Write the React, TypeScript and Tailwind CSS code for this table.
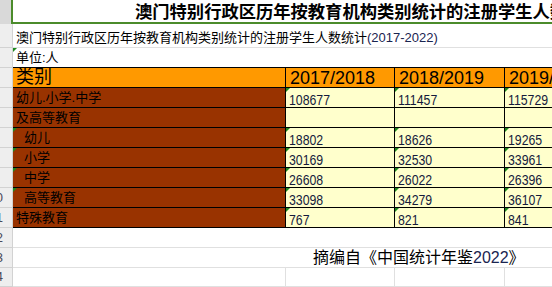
import React from "react";

const F = "font-['Liberation_Sans','Noto_Sans_CJK_SC',sans-serif]";

function Tri() {
  return (
    <div className="absolute left-0 top-0 h-0 w-0 border-t-[4px] border-r-[4px] border-t-[#1f8a1f] border-r-transparent" />
  );
}

function RowHead({ n, h }: { n?: string; h: string }) {
  return (
    <div
      className={`${h} w-[13px] shrink-0 overflow-hidden flex items-center justify-end pr-[9px] border-r border-b border-[#d2d2d2] bg-[#eeeeee] text-[13px] leading-[14px] text-[#4a4a5a] ${F}`}
    >
      {n && <span className="whitespace-nowrap">{n}</span>}
    </div>
  );
}

type DataRow = { cat: string; indent?: boolean; tri?: boolean; vals: string[]; vtri: boolean; n?: string };

const rows: DataRow[] = [
  { cat: "幼儿.小学.中学", vals: ["108677", "111457", "115729"], vtri: true },
  { cat: "及高等教育", vals: ["", "", ""], vtri: false },
  { cat: "幼儿", indent: true, tri: true, vals: ["18802", "18626", "19265"], vtri: true },
  { cat: "小学", indent: true, tri: true, vals: ["30169", "32530", "33961"], vtri: true },
  { cat: "中学", indent: true, tri: true, vals: ["26608", "26022", "26396"], vtri: true },
  { cat: "高等教育", indent: true, tri: true, vals: ["33098", "34279", "36107"], vtri: true, n: "10" },
  { cat: "特殊教育", vals: ["767", "821", "841"], vtri: true, n: "11" },
];

const colW = ["w-[109px]", "w-[110px]", "flex-1"];

export default function App() {
  return (
    <div className={`w-[552px] h-[287px] overflow-hidden bg-white ${F} text-black`}>
      {/* Row 1: title */}
      <div className="flex h-[24px]">
        <div className="h-[24px] w-[11px] shrink-0 bg-[#d9d9d9]" />
        <div className="flex-1 min-w-0 overflow-hidden border-l-2 border-b-2 border-[#4b8b2b] bg-white pl-[122px] flex items-center">
          <span className="whitespace-nowrap font-bold text-[17.3px] leading-[20px] font-['Noto_Sans_CJK_SC',sans-serif]">
            澳门特别行政区历年按教育机构类别统计的注册学生人数统计
          </span>
        </div>
      </div>

      {/* Row 2: subtitle */}
      <div className="flex h-[24px]">
        <RowHead h="h-[24px]" />
        <div className="flex-1 min-w-0 overflow-hidden border-b border-[#e0e0e0] flex items-end pl-[3px] pb-[1px]">
          <span className="whitespace-nowrap text-[13px] leading-[16px]">
            澳门特别行政区历年按教育机构类别统计的注册学生人数统计
            <span className="text-[#1a2450]">(2017-2022)</span>
          </span>
        </div>
      </div>

      {/* Row 3: unit */}
      <div className="flex h-[20px]">
        <RowHead h="h-[20px]" />
        <div className="relative flex-1 min-w-0 overflow-hidden border-b border-black flex items-end pl-[3px] pb-[1px]">
          <Tri />
          <span className="whitespace-nowrap text-[13px] leading-[16px]">单位:人</span>
        </div>
      </div>

      {/* Row 4: header */}
      <div className="flex h-[20px]">
        <RowHead h="h-[20px]" />
        <div className="flex flex-1 min-w-0 overflow-hidden bg-[#ff9900] border-b border-black">
          <div className="w-[273px] shrink-0 border-r border-black flex items-end pl-[3px]">
            <span className="text-[18px] leading-[19px] whitespace-nowrap">类别</span>
          </div>
          {["2017/2018", "2018/2019", "2019/2020"].map((y, i) => (
            <div
              key={y}
              className={`${colW[i]} shrink-0 min-w-0 overflow-hidden ${i < 2 ? "border-r border-black" : ""} flex items-end pl-[4px]`}
            >
              <span className="text-[18px] leading-[18px] whitespace-nowrap font-['Liberation_Sans',sans-serif]">{y}</span>
            </div>
          ))}
        </div>
      </div>

      {/* Data rows */}
      {rows.map((r, ri) => (
        <div key={ri} className="flex h-[20px]">
          <RowHead h="h-[20px]" n={r.n} />
          <div className="flex flex-1 min-w-0 overflow-hidden border-b border-black">
            <div
              className={`relative w-[273px] shrink-0 bg-[#993300] border-r border-black flex items-end pb-[1px] ${
                r.indent ? "pl-[11px]" : "pl-[3px]"
              }`}
            >
              {r.tri && <Tri />}
              <span className="text-[13px] leading-[16px] whitespace-nowrap text-black">{r.cat}</span>
            </div>
            {r.vals.map((v, i) => (
              <div
                key={i}
                className={`relative ${colW[i]} shrink-0 min-w-0 overflow-hidden bg-[#ffffcc] ${
                  i < 2 ? "border-r border-black" : ""
                } flex items-end pl-[3px]`}
              >
                {r.vtri && <Tri />}
                <span className="inline-block origin-left scale-x-[0.82] font-['Liberation_Sans',sans-serif] text-[15px] leading-[15px] text-[#141a3c] whitespace-nowrap">
                  {v}
                </span>
              </div>
            ))}
          </div>
        </div>
      ))}

      {/* Row 12 */}
      <div className="flex h-[20px]">
        <RowHead h="h-[20px]" n="12" />
        <div className="flex-1 border-b border-[#e0e0e0]" />
      </div>

      {/* Row 13: source */}
      <div className="flex h-[20px]">
        <RowHead h="h-[20px]" n="13" />
        <div className="flex-1 min-w-0 overflow-hidden border-b border-[#e0e0e0] flex items-end pl-[300px]">
          <span className="text-[16px] leading-[18px] whitespace-nowrap">
            摘编自《中国统计年鉴<span className="text-[#1a2450]">2022</span>》
          </span>
        </div>
      </div>

      {/* Row 14 */}
      <div className="flex h-[19px]">
        <RowHead h="h-[19px]" n="14" />
        <div className="flex flex-1 min-w-0 border-b border-[#e0e0e0]">
          <div className="w-[273px] shrink-0 border-r border-[#e0e0e0]" />
          <div className="w-[109px] shrink-0 border-r border-[#e0e0e0]" />
          <div className="w-[110px] shrink-0 border-r border-[#e0e0e0]" />
          <div className="flex-1" />
        </div>
      </div>
    </div>
  );
}
